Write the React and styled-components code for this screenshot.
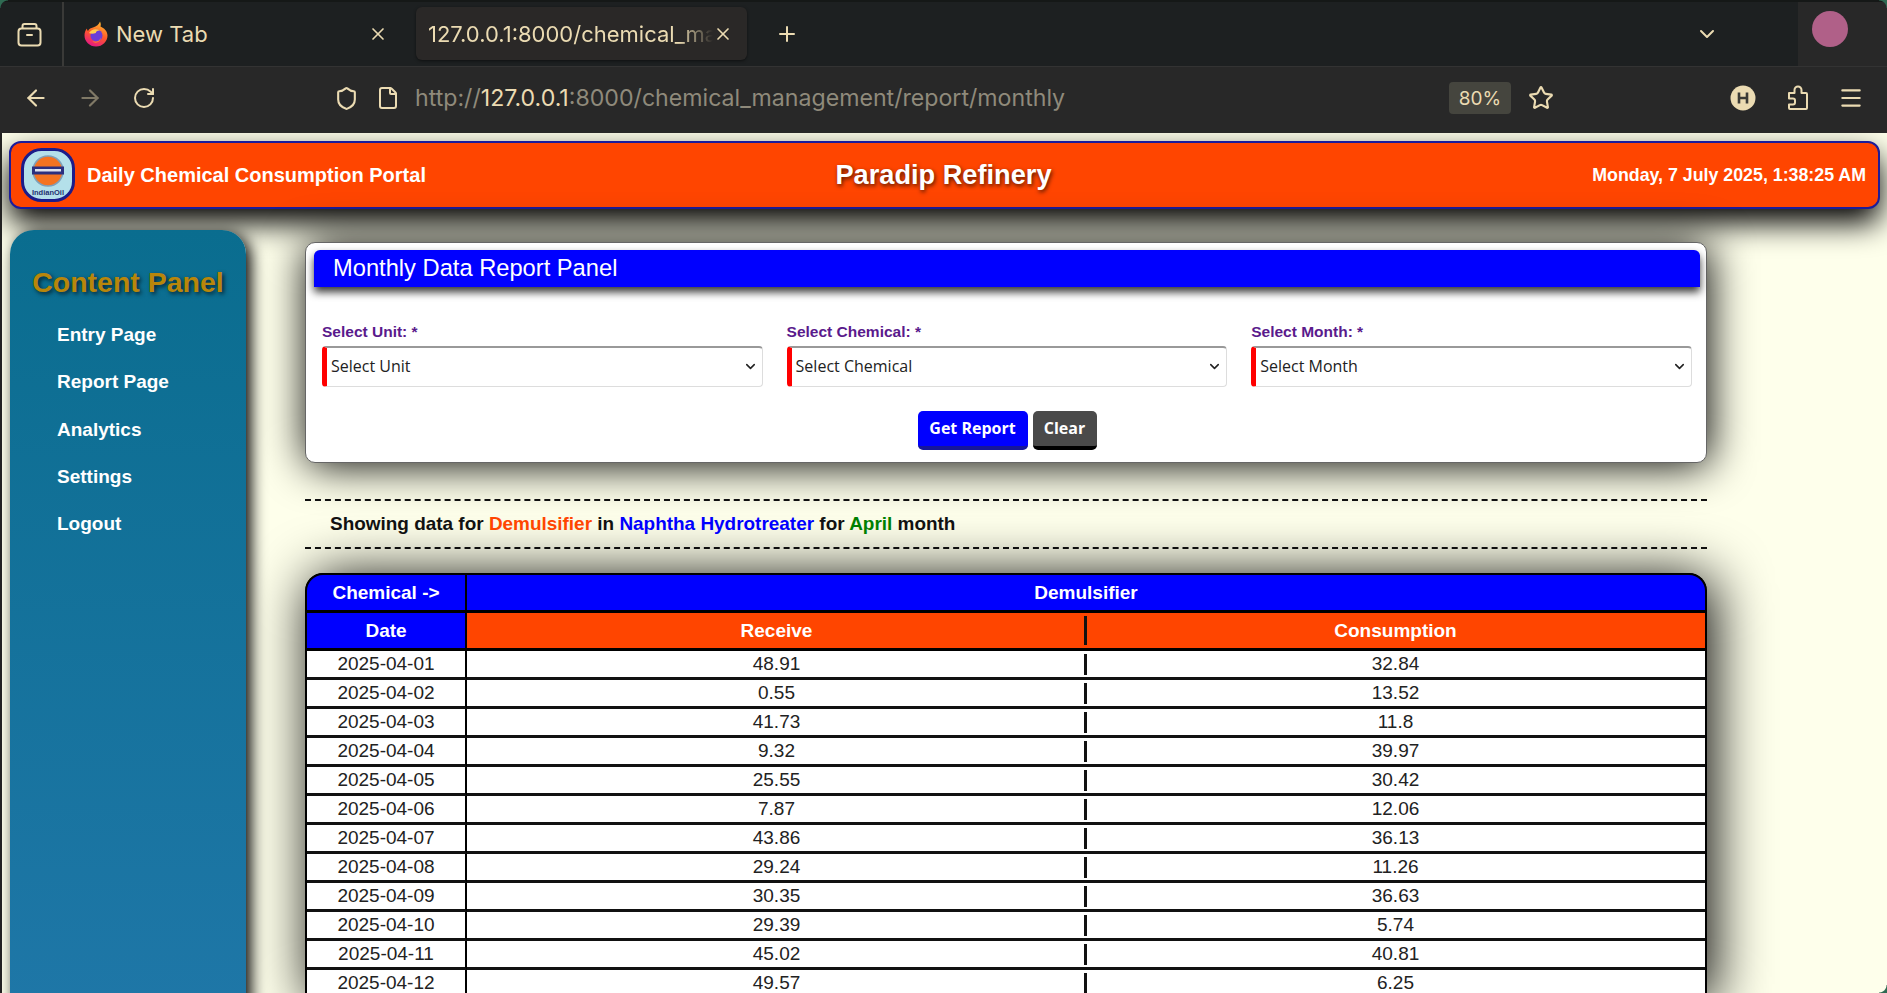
import React from 'react';
import styled, { createGlobalStyle } from 'styled-components';
import { ArrowLeft, ArrowRight, RotateCw, Shield, File, Star, Menu, ChevronDown, Plus, X } from 'lucide-react';

const GlobalStyle = createGlobalStyle`
  html, body {
    margin: 0;
    padding: 0;
    height: 100%;
    overflow: hidden;
    background: #282828;
  }
`;

const Screen = styled.div`
  width: 1887px;
  height: 993px;
  display: flex;
  flex-direction: column;
  overflow: hidden;
  position: relative;
  font-family: "Liberation Sans", Arial, sans-serif;
`;

const Corner = styled.div`
  position: absolute;
  width: 8px;
  height: 8px;
  ${(p) => p.$at};
  background: radial-gradient(circle at ${(p) => p.$center}, transparent 7px, #2f6a52 8px);
`;

const TabBar = styled.div`
  height: 66px;
  flex: none;
  display: flex;
  align-items: stretch;
  background: #1d2021;
  color: #ebdbb2;
  font-family: Inter, "Noto Sans", sans-serif;
  font-size: 22px;
  box-sizing: border-box;
  border-top: 2px solid #151817;
`;

const TabsButton = styled.div`
  width: 64px;
  flex: none;
  box-sizing: border-box;
  display: flex;
  align-items: center;
  justify-content: center;
  padding-right: 3px;
  border-right: 2px solid #3a3a38;
`;

const Tab = styled.div`
  display: flex;
  align-items: center;
  box-sizing: border-box;
  width: ${(p) => p.$width}px;
  height: 53px;
  margin: 5px 0 0 ${(p) => p.$gap}px;
  padding: 0 ${(p) => p.$right}px 0 ${(p) => p.$left}px;
  border-radius: 6px;
  background: ${(p) => (p.$active ? '#2a2827' : 'transparent')};
  box-shadow: ${(p) => (p.$active ? '0 1px 3px rgba(0,0,0,0.5)' : 'none')};
`;

const TabTitle = styled.span`
  flex: 1;
  min-width: 0;
  white-space: nowrap;
  overflow: hidden;
  margin-left: ${(p) => p.$gap || 0}px;
  ${(p) => p.$fade && 'mask-image: linear-gradient(to right, #000 88%, transparent 100%);'}
`;

const NewTab = styled.div`
  display: flex;
  align-items: center;
  margin-left: 28px;
`;

const TabListButton = styled.div`
  display: flex;
  align-items: center;
  margin-left: auto;
  margin-right: 79px;
`;

const ProfileArea = styled.div`
  width: 89px;
  flex: none;
  background: #282828;
  display: flex;
  align-items: center;
  padding: 0 0 10px 14px;
  box-sizing: border-box;
`;

const Avatar = styled.div`
  width: 36px;
  height: 36px;
  border-radius: 50%;
  background: #b06088;
`;

const Toolbar = styled.div`
  height: 67px;
  flex: none;
  display: flex;
  align-items: center;
  padding-bottom: 4px;
  background: #282828;
  border-top: 1px solid #333;
  box-sizing: border-box;
  color: #ebdbb2;
`;

const ToolIcon = styled.div`
  width: 26px;
  height: 26px;
  flex: none;
  display: flex;
  align-items: center;
  justify-content: center;
  margin-left: ${(p) => p.$gap}px;
  opacity: ${(p) => (p.$dim ? 0.45 : 1)};
`;

const Url = styled.div`
  margin-left: 14px;
  font-family: Inter, "Noto Sans", sans-serif;
  font-size: 23.15px;
  color: #8f8a7b;
  white-space: nowrap;
  width: 1034px;
  flex: none;
  b {
    font-weight: 400;
    color: #ebdbb2;
  }
`;

const ZoomPill = styled.div`
  width: 62px;
  height: 32px;
  flex: none;
  display: flex;
  align-items: center;
  justify-content: center;
  border-radius: 4px;
  background: #45453e;
  font-family: Inter, "Noto Sans", sans-serif;
  font-size: 19px;
  color: #ebdbb2;
`;

const Page = styled.div`
  flex: 1;
  min-height: 0;
  overflow: hidden;
  background: #feffeb;
  border-left: 2px solid #222;
  box-sizing: border-box;
  padding-top: 8px;
`;

const Header = styled.header`
  height: 68px;
  box-sizing: border-box;
  margin: 0 7px 0 7px;
  padding: 0 12px 0 10px;
  display: grid;
  grid-template-columns: 1fr auto 1fr;
  align-items: center;
  background: #ff4500;
  border: 2px solid #1c1c9a;
  border-radius: 12px;
  box-shadow: 0 14px 30px #000;
  color: #fff;
  font-weight: 700;
  position: relative;
`;

const Brand = styled.div`
  display: flex;
  align-items: center;
  gap: 12px;
  font-size: 20px;
`;

const SiteName = styled.div`
  font-size: 27.2px;
  text-shadow: 1px 2px 4px rgba(0, 0, 0, 0.7);
`;

const Clock = styled.div`
  justify-self: end;
  font-size: 17.8px;
`;

const Body = styled.div`
  display: flex;
  align-items: flex-start;
  padding: 21px 0 0 8px;
`;

const Sidebar = styled.nav`
  width: 236px;
  height: 800px;
  flex: none;
  box-sizing: border-box;
  padding-top: 35px;
  border-radius: 24px 24px 0 0;
  background: linear-gradient(180deg, #0a6d8f 0%, #1f77a8 100%);
  box-shadow: 5px 4px 16px #000;
  position: relative;
`;

const SidebarTitle = styled.div`
  text-align: center;
  font-size: 28.5px;
  font-weight: 700;
  line-height: 34px;
  color: #b8860b;
  text-shadow: 2px 2px 4px rgba(0, 0, 0, 0.7);
  margin-bottom: 12px;
`;

const NavItem = styled.a`
  display: block;
  height: 47.3px;
  line-height: 47.3px;
  padding-left: 47px;
  font-size: 19px;
  font-weight: 700;
  color: #fff;
`;

const Content = styled.main`
  width: 1402px;
  flex: none;
  margin: 12px 0 0 59px;
`;

const Panel = styled.section`
  height: 221px;
  box-sizing: border-box;
  padding: 7px 6px 0 8px;
  background: #fff;
  border: 1px solid #666;
  border-radius: 10px;
  box-shadow: 2px 2px 44px #000;
  position: relative;
`;

const PanelTitle = styled.div`
  height: 37px;
  line-height: 36px;
  padding-left: 19px;
  background: #0000ff;
  color: #fff;
  font-size: 23.7px;
  border-radius: 6px 6px 0 0;
  box-shadow: 0 5px 9px rgba(0, 0, 0, 0.8);
`;

const FieldRow = styled.div`
  display: grid;
  grid-template-columns: repeat(3, 440.6px);
  column-gap: 24px;
  padding: 36px 0 0 8px;
`;

const Label = styled.label`
  display: block;
  height: 23px;
  font-size: 15.5px;
  font-weight: 700;
  color: #5a1a8c;
`;

const FakeSelect = styled.div`
  height: 41px;
  box-sizing: border-box;
  display: flex;
  align-items: center;
  justify-content: space-between;
  padding: 0 4px 2px 4px;
  background: #fff;
  border: 1px solid #ddd;
  border-top: 2px solid #999;
  border-left: 5px solid #f00;
  border-radius: 4px;
  font-family: "Open Sans", "Noto Sans", sans-serif;
  font-size: 16px;
  color: #222;
`;

const Actions = styled.div`
  display: flex;
  justify-content: center;
  gap: 5px;
  margin-top: 24px;
`;

const Button = styled.button`
  height: 39px;
  width: ${(p) => p.$width}px;
  padding: 0 0 2px;
  border: none;
  border-bottom: 4px solid ${(p) => (p.$primary ? '#16169a' : '#000')};
  border-radius: 5px;
  background: ${(p) => (p.$primary ? '#0000ff' : '#4a4a4a')};
  color: #fff;
  font-family: "Open Sans", "Noto Sans", sans-serif;
  font-size: 16px;
  font-weight: 700;
`;

const Summary = styled.div`
  margin-top: 36px;
  height: 46px;
  line-height: 46px;
  padding-left: 25px;
  border-top: 2px dashed #111;
  border-bottom: 2px dashed #111;
  font-size: 18.95px;
  font-weight: 700;
  color: #111;
`;

const Hl = styled.span`
  color: ${(p) => p.$color};
`;

const TableWrap = styled.div`
  margin-top: 24px;
  border-radius: 18px 18px 0 0;
  box-shadow: 6px 4px 56px #000;
  background: #000;
  overflow: hidden;
`;

const Table = styled.table`
  width: 100%;
  table-layout: fixed;
  border-collapse: separate;
  border-spacing: 0;
  border: 2px solid #000;
  border-bottom: none;
  border-radius: 18px 18px 0 0;
  overflow: hidden;
  font-size: 19px;
`;

const DateCol = styled.col`
  width: 160px;
`;

const HeadCell = styled.th`
  height: 35px;
  padding: 0;
  color: #fff;
  font-size: 19px;
  font-weight: 700;
  background: ${(p) => p.$bg};
  border-bottom: 3px solid #000;
  border-right: ${(p) => (p.$ruled ? '2px solid #000' : 'none')};
`;

const SplitHead = styled(HeadCell)`
  position: relative;
  &::after {
    content: '';
    position: absolute;
    right: -1px;
    top: 3px;
    bottom: 3px;
    width: 3px;
    background: #111;
  }
`;

const Cell = styled.td`
  height: 26px;
  padding: 0;
  background: #fff;
  color: #222;
  text-align: center;
  border-bottom: 3px solid #111;
  border-right: ${(p) => (p.$ruled ? '2px solid #000' : 'none')};
`;

const SplitCell = styled(Cell)`
  position: relative;
  &::after {
    content: '';
    position: absolute;
    right: -1px;
    top: 3px;
    bottom: 2px;
    width: 3px;
    background: #111;
  }
`;

const rows = [
  ['2025-04-01', '48.91', '32.84'],
  ['2025-04-02', '0.55', '13.52'],
  ['2025-04-03', '41.73', '11.8'],
  ['2025-04-04', '9.32', '39.97'],
  ['2025-04-05', '25.55', '30.42'],
  ['2025-04-06', '7.87', '12.06'],
  ['2025-04-07', '43.86', '36.13'],
  ['2025-04-08', '29.24', '11.26'],
  ['2025-04-09', '30.35', '36.63'],
  ['2025-04-10', '29.39', '5.74'],
  ['2025-04-11', '45.02', '40.81'],
  ['2025-04-12', '49.57', '6.25'],
];

const navItems = ['Entry Page', 'Report Page', 'Analytics', 'Settings', 'Logout'];
const fields = [
  ['Select Unit: *', 'Select Unit'],
  ['Select Chemical: *', 'Select Chemical'],
  ['Select Month: *', 'Select Month'],
];

const FirefoxIcon = () => (
  <svg width="24" height="26" viewBox="0 0 24 26">
    <defs>
      <linearGradient id="fx" x1="0.7" y1="0" x2="0.3" y2="1">
        <stop offset="0" stopColor="#ffbd2e" />
        <stop offset="0.5" stopColor="#ff5a2a" />
        <stop offset="1" stopColor="#e31587" />
      </linearGradient>
    </defs>
    <path d="M12 25.500C5.500 25.500 0.500 20.500 0.500 14.500 0.500 11.500 1.500 9 3 7.500c0 1.200.4 2 1 2.500 1-2.500 3-3 5-3.500 3.500-1 6-3 7-6 1 2 1 3.500.5 5 3.500 1.500 7 4.500 7 9 0 6-5 11-11.500 11z" fill="url(#fx)" />
    <circle cx="12.500" cy="14.500" r="6" fill="#6a3fd8" />
    <path d="M5 12c2-3.500 7-5 11-2.500-2.500-.3-4 .8-4.200 2.500-2.500 1-5 1-6.800 0z" fill="#ffcf4f" />
    <path d="M8.500 20c3 1.500 7 .5 8.500-3.500-.5 4.500-6 7-8.500 3.500z" fill="#ff8a2a" />
  </svg>
);

const TabsIcon = () => (
  <svg width="25" height="26" viewBox="0 0 25 26" fill="none" stroke="#ebdbb2" strokeWidth="2">
    <rect x="1.500" y="7.500" width="22" height="17" rx="3" />
    <path d="M5.500 7.500V5a2 2 0 0 1 2-2h10a2 2 0 0 1 2 2v2.500" />
    <path d="M10 14h5" strokeLinecap="round" />
  </svg>
);

const HelperIcon = () => (
  <svg width="26" height="26" viewBox="0 0 26 26">
    <circle cx="13" cy="13" r="12.500" fill="#ebdbb2" />
    <path d="M9 7.500v11M17 7.500v11M9 13h8" stroke="#3a3a36" strokeWidth="2.600" fill="none" />
  </svg>
);

const ExtensionsIcon = () => (
  <svg width="22" height="26" viewBox="0 0 22 26" fill="none" stroke="#ebdbb2" strokeWidth="2" strokeLinejoin="round">
    <path d="M2 8h5.500V5a3.500 3.500 0 0 1 7 0v3H19a1 1 0 0 1 1 1v14a1 1 0 0 1-1 1H3a1 1 0 0 1-1-1v-3.500h4a2 2 0 0 0 2-2v-2a2 2 0 0 0-2-2H2z" />
  </svg>
);

const OilLogo = () => (
  <svg width="54" height="54" viewBox="0 0 54 54">
    <rect x="1.500" y="1.500" width="51" height="51" rx="19" fill="#b4e0ea" stroke="#1c1c8a" strokeWidth="3" />
    <circle cx="27" cy="23" r="15" fill="#f47321" stroke="#7f9fb8" strokeWidth="1.500" />
    <rect x="11" y="18.500" width="32" height="8" fill="#2b2f7f" />
    <rect x="14" y="21" width="26" height="2.500" fill="#dfe3ef" />
    <text x="27" y="47" textAnchor="middle" fontSize="7.500" fontWeight="700" fill="#23306f" fontFamily="Liberation Sans, sans-serif">IndianOil</text>
  </svg>
);

export default function App() {
  return (
    <Screen>
      <GlobalStyle />
      <TabBar>
        <TabsButton><TabsIcon /></TabsButton>
        <Tab $width={344} $gap={0} $left={20} $right={20}>
          <FirefoxIcon />
          <TabTitle $gap={8}>New Tab</TabTitle>
          <X size={20} />
        </Tab>
        <Tab $active $width={331} $gap={8} $left={12} $right={14}>
          <TabTitle $fade>127.0.0.1:8000/chemical_management</TabTitle>
          <X size={20} />
        </Tab>
        <NewTab><Plus size={24} /></NewTab>
        <TabListButton><ChevronDown size={24} /></TabListButton>
        <ProfileArea><Avatar /></ProfileArea>
      </TabBar>
      <Toolbar>
        <ToolIcon $gap={23}><ArrowLeft size={26} /></ToolIcon>
        <ToolIcon $gap={28} $dim><ArrowRight size={26} /></ToolIcon>
        <ToolIcon $gap={28}><RotateCw size={24} /></ToolIcon>
        <ToolIcon $gap={176}><Shield size={25} /></ToolIcon>
        <ToolIcon $gap={16}><File size={24} /></ToolIcon>
        <Url>http://<b>127.0.0.1</b>:8000/chemical_management/report/monthly</Url>
        <ZoomPill>80%</ZoomPill>
        <ToolIcon $gap={17}><Star size={26} /></ToolIcon>
        <ToolIcon $gap={176}><HelperIcon /></ToolIcon>
        <ToolIcon $gap={29}><ExtensionsIcon /></ToolIcon>
        <ToolIcon $gap={27}><Menu size={26} /></ToolIcon>
      </Toolbar>
      <Page>
        <Header>
          <Brand><OilLogo />Daily Chemical Consumption Portal</Brand>
          <SiteName>Paradip Refinery</SiteName>
          <Clock>Monday, 7 July 2025, 1:38:25 AM</Clock>
        </Header>
        <Body>
          <Sidebar>
            <SidebarTitle>Content Panel</SidebarTitle>
            {navItems.map((item) => <NavItem key={item}>{item}</NavItem>)}
          </Sidebar>
          <Content>
            <Panel>
              <PanelTitle>Monthly Data Report Panel</PanelTitle>
              <FieldRow>
                {fields.map(([label, placeholder]) => (
                  <div key={label}>
                    <Label>{label}</Label>
                    <FakeSelect>{placeholder}<ChevronDown size={15} strokeWidth={2.5} /></FakeSelect>
                  </div>
                ))}
              </FieldRow>
              <Actions>
                <Button $primary $width={110}>Get Report</Button>
                <Button $width={64}>Clear</Button>
              </Actions>
            </Panel>
            <Summary>
              Showing data for <Hl $color="#ff4500">Demulsifier</Hl> in <Hl $color="#0000ff">Naphtha Hydrotreater</Hl> for <Hl $color="#008000">April</Hl> month
            </Summary>
            <TableWrap>
              <Table>
                <colgroup>
                  <DateCol />
                  <col />
                  <col />
                </colgroup>
                <thead>
                  <tr>
                    <HeadCell $bg="#0000ff" $ruled>Chemical -&gt;</HeadCell>
                    <HeadCell $bg="#0000ff" colSpan={2}>Demulsifier</HeadCell>
                  </tr>
                  <tr>
                    <HeadCell $bg="#0000ff" $ruled>Date</HeadCell>
                    <SplitHead $bg="#ff4500">Receive</SplitHead>
                    <HeadCell $bg="#ff4500">Consumption</HeadCell>
                  </tr>
                </thead>
                <tbody>
                  {rows.map(([date, receive, consumption]) => (
                    <tr key={date}>
                      <Cell $ruled>{date}</Cell>
                      <SplitCell>{receive}</SplitCell>
                      <Cell>{consumption}</Cell>
                    </tr>
                  ))}
                </tbody>
              </Table>
            </TableWrap>
          </Content>
        </Body>
      </Page>
      <Corner $at="top: 0; left: 0" $center="100% 100%" />
      <Corner $at="top: 0; right: 0" $center="0 100%" />
      <Corner $at="bottom: 0; right: 0" $center="0 0" />
    </Screen>
  );
}
